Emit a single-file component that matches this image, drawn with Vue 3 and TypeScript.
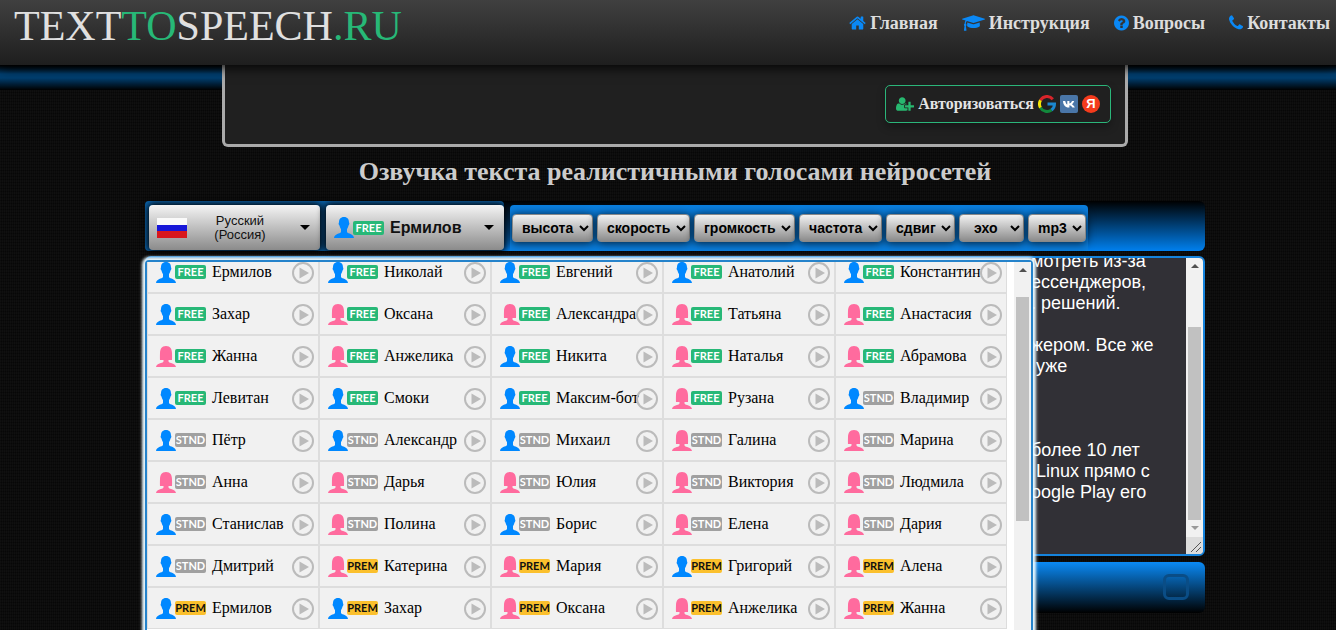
<script setup lang="ts">
import { onMounted, ref } from 'vue'

type Kind = 'm' | 'f'
type Tier = 'FREE' | 'STND' | 'PREM'
interface Voice { kind: Kind; tier: Tier; name: string }

const v = (kind: Kind, tier: Tier, name: string): Voice => ({ kind, tier, name })

const voices: Voice[] = [
  v('m', 'FREE', 'Ермилов'), v('m', 'FREE', 'Николай'), v('m', 'FREE', 'Евгений'), v('m', 'FREE', 'Анатолий'), v('m', 'FREE', 'Константин'),
  v('m', 'FREE', 'Захар'), v('f', 'FREE', 'Оксана'), v('f', 'FREE', 'Александра'), v('f', 'FREE', 'Татьяна'), v('f', 'FREE', 'Анастасия'),
  v('f', 'FREE', 'Жанна'), v('f', 'FREE', 'Анжелика'), v('m', 'FREE', 'Никита'), v('f', 'FREE', 'Наталья'), v('f', 'FREE', 'Абрамова'),
  v('m', 'FREE', 'Левитан'), v('m', 'FREE', 'Смоки'), v('m', 'FREE', 'Максим-бот'), v('f', 'FREE', 'Рузана'), v('m', 'STND', 'Владимир'),
  v('m', 'STND', 'Пётр'), v('m', 'STND', 'Александр'), v('m', 'STND', 'Михаил'), v('f', 'STND', 'Галина'), v('f', 'STND', 'Марина'),
  v('f', 'STND', 'Анна'), v('f', 'STND', 'Дарья'), v('f', 'STND', 'Юлия'), v('f', 'STND', 'Виктория'), v('f', 'STND', 'Людмила'),
  v('m', 'STND', 'Станислав'), v('f', 'STND', 'Полина'), v('m', 'STND', 'Борис'), v('f', 'STND', 'Елена'), v('f', 'STND', 'Дария'),
  v('m', 'STND', 'Дмитрий'), v('f', 'PREM', 'Катерина'), v('f', 'PREM', 'Мария'), v('m', 'PREM', 'Григорий'), v('f', 'PREM', 'Алена'),
  v('m', 'PREM', 'Ермилов'), v('m', 'PREM', 'Захар'), v('f', 'PREM', 'Оксана'), v('f', 'PREM', 'Анжелика'), v('f', 'PREM', 'Жанна'),
]

const person: Record<Kind, string> = {
  m: 'M10 0C6.500 0 5 2.300 5 5.400C4.300 5.600 4.700 8 5.500 8.600C5.900 10.500 6.500 11.500 7 12V15C6 17 0.500 16.500 0 21H20C19.500 16.500 14 17 13 15V12C13.500 11.500 14.100 10.500 14.500 8.600C15.300 8 15.700 5.600 15 5.400C15 2.300 13.500 0 10 0Z',
  f: 'M10 0C5.500 0 4.200 3 4 7C3.900 10 3.900 12.500 4 14H7.500V15.500C6.500 17.500 0.500 17 0 21H20C19.500 17 13.500 17.500 12.500 15.500V14H16C16.100 12.500 16.100 10 16 7C15.800 3 14.500 0 10 0Z',
}

const nav = [
  { label: 'Главная', w: 1664, icon: 'M1408 992v480q0 26-19 45t-45 19H960v-384H704v384H320q-26 0-45-19t-19-45V992l575-474 574 474zm223-69l-62 74q-8 9-21 11h-3q-13 0-21-7L832 424l-692 577q-12 8-24 7-13-2-21-11l-62-74q-8-10-7-23.500t11-21.500l719-599q32-26 76-26t76 26l244 204V288q0-14 9-23t23-9h192q14 0 23 9t9 23v408l219 182q10 8 11 21.500t-7 23.500z' },
  { label: 'Инструкция', w: 2304, icon: 'M1774 836l18 316q4 69-82 128t-235 93.500-323 34.500-323-34.500-235-93.500-82-128l18-316 574 181q22 7 48 7t48-7zm530-324q0 23-22 31l-1120 352q-4 1-10 1t-10-1L490 689q-43 34-71 111.500T385 979q63 36 63 109 0 69-58 107l58 433q2 14-8 25-9 11-24 11H224q-15 0-24-11-10-11-8-25l58-433q-58-38-58-107 0-73 65-111 11-207 98-330L22 543Q0 535 0 512t22-31L1142 129q4-1 10-1t10 1l1120 352q22 8 22 31z' },
  { label: 'Вопросы', w: 1536, icon: 'M896 1376v-192q0-14-9-23t-23-9H672q-14 0-23 9t-9 23v192q0 14 9 23t23 9h192q14 0 23-9t9-23zm256-672q0-88-55.500-163T958 425t-170-41q-243 0-371 213-15 24 8 42l132 100q7 6 19 6 16 0 25-12 53-68 86-92 34-24 86-24 48 0 85.500 26t37.500 59q0 38-20 61t-68 45q-63 28-115.500 86.500T640 1020v36q0 14 9 23t23 9h192q14 0 23-9t9-23q0-19 21.500-49.500T972 957q32-18 49-28.500t46-35 44.500-48 28-60.500 12.500-81zm384 192q0 209-103 385.500T1153.500 1561 768 1664t-385.500-103T103 1281.500 0 896t103-385.500T382.500 231 768 128t385.500 103T1433 510.500 1536 896z' },
  { label: 'Контакты', w: 1408, icon: 'M1408 1240q0 27-10 70.500t-21 68.500q-21 50-122 106-94 51-186 51-27 0-53-3.500t-57.500-12.500-47-14.500T856 1485t-49-18q-98-35-175-83-127-79-264-216T152 904q-48-77-83-175-3-9-18-49t-20.500-55.500T16 577.500 3.500 520 0 467q0-92 51-186 56-101 106-122 25-11 68.500-21T296 128q14 0 21 3 18 6 53 76 11 19 30 54t35 63.500 31 53.500q3 4 17.500 25t21.500 35.500 7 28.500q0 20-28.500 50t-62 55-62 53-28.500 46q0 9 5 22.500t8.500 20.500 14 24 11.500 19q76 137 174 235t235 174q2 1 19 11.500t24 14 20.500 8.500 22.500 5q18 0 46-28.500t53-62 55-62 50-28.500q14 0 28.500 7t35.500 21.500 25 17.500q25 15 53.500 31t63.500 35 54 30q70 35 76 53 3 7 3 21z' },
]

const params = ['высота', 'скорость', 'громкость', 'частота', 'сдвиг', 'эхо', 'mp3']

const text = ref(`мотреть из-за
ессенджеров,
. решений.

жером. Все же
 уже



более 10 лет
 Linux прямо с
oogle Play его`)

const list = ref<HTMLElement | null>(null)
const area = ref<HTMLTextAreaElement | null>(null)
onMounted(() => {
  if (list.value) list.value.scrollTop = 11
  if (area.value) area.value.scrollTop = 7
})
</script>

<template>
  <div class="page">
    <header class="header">
      <a href="#" class="logo">TEXT<b>TO</b>SPEECH<b>.RU</b></a>
      <nav class="nav">
        <a v-for="n in nav" :key="n.label" href="#">
          <svg :viewBox="`0 0 ${n.w} 1792`" :width="Math.round(n.w / 100)" height="18"><path :d="n.icon" /></svg>{{ n.label }}
        </a>
      </nav>
    </header>

    <div class="band">
      <section class="panel">
        <button type="button" class="login">
          <svg viewBox="0 0 2048 1792" width="18" height="18" class="green"><path d="M704 896q-159 0-271.500-112.500T320 512t112.500-271.500T704 128t271.500 112.500T1088 512 975.500 783.500 704 896zm960 128h352q13 0 22.500 9.500t9.500 22.500v192q0 13-9.500 22.500t-22.500 9.500h-352v352q0 13-9.500 22.500t-22.500 9.500h-192q-13 0-22.500-9.500t-9.500-22.500v-352h-352q-13 0-22.500-9.500t-9.500-22.500v-192q0-13 9.500-22.500t22.500-9.500h352V672q0-13 9.500-22.500t22.500-9.500h192q13 0 22.500 9.500t9.500 22.500v352zm-736 224q0 52 38 90t90 38h256v238q-68 50-171 50H267q-121 0-194-69T0 1405q0-53 3.500-103.500t14-109T44 1084t43-97.500 62-81 85.500-53.500T346 832q19 0 39 17 79 61 154.500 91.500T704 971t164.500-30.500T1023 849q20-17 39-17 132 0 217 96h-223q-52 0-90 38t-38 90v192z" /></svg>
          <span>Авторизоваться</span>
          <svg viewBox="0 0 18 18" width="18" height="18" class="ring">
            <path d="M14.800 4.200A7.500 7.500 0 0 0 2.500 5.300" stroke="#d8242a" />
            <path d="M2.500 5.300A7.500 7.500 0 0 0 2.500 12.700" stroke="#f5e505" />
            <path d="M2.500 12.700A7.500 7.500 0 0 0 13.500 15" stroke="#12893c" />
            <path d="M13.500 15A7.500 7.500 0 0 0 16.500 9H9.500" stroke="#1b87cf" />
          </svg>
          <svg viewBox="0 0 18 18" width="18" height="18"><rect width="18" height="18" rx="2" fill="#4a76a8" /><path d="M3 6H5.200C5.600 8 6.500 9.300 7.300 9.600V6H9.400V8.600C10.400 8.400 11.400 7.300 12 6H14.200C13.700 7.600 12.700 8.700 11.900 9.200C12.800 9.700 14.100 10.700 14.800 12.500H12.400C11.800 11.300 10.700 10.400 9.400 10.200V12.500H8.600C5.300 12.500 3.200 10 3 6Z" fill="#fff" /></svg>
          <span class="ya">Я</span>
        </button>
      </section>
    </div>

    <main class="main">
      <h1>Озвучка текста реалистичными голосами нейросетей</h1>

      <div class="toolbar">
        <div class="pickers">
          <button type="button" class="pick lang">
            <span class="flag"></span><span class="langname">Русский<br>(Россия)</span><i class="caret"></i>
          </button>
          <button type="button" class="pick voice">
            <svg viewBox="0 0 20 21" width="20" height="21" class="m"><path :d="person.m" /></svg><span class="tier free">FREE</span>
            <span class="current">Ермилов</span><i class="caret"></i>
          </button>
        </div>
        <div class="params">
          <select v-for="p in params" :key="p" :aria-label="p" :class="{ roomy: p === 'эхо' }"><option>{{ p }}</option></select>
        </div>
      </div>

      <div class="editor">
        <textarea ref="area" v-model="text" aria-label="Текст" spellcheck="false"></textarea>
        <div class="bar">
          <i class="up"></i><div class="thumb text-thumb"></div><i class="down"></i><svg class="grip" viewBox="0 0 17 17"><path d="M5 15L15 5M10 15L15 10" /></svg>
        </div>
      </div>

      <div class="footer"><button type="button" class="stop" aria-label="Стоп"></button></div>

      <div class="menu">
        <div ref="list" class="list">
          <div class="grid">
            <div v-for="(x, i) in voices" :key="i" class="cell">
              <svg viewBox="0 0 20 21" width="20" height="21" :class="x.kind"><path :d="person[x.kind]" /></svg>
              <span class="tier" :class="x.tier.toLowerCase()">{{ x.tier }}</span>
              <span class="name">{{ x.name }}</span>
              <button type="button" class="play" :aria-label="`Прослушать ${x.name}`">
                <svg viewBox="0 0 22 22" width="22" height="22"><circle cx="11" cy="11" r="10" /><path d="M7.500 5.500L17 11L7.500 16.500Z" /></svg>
              </button>
            </div>
          </div>
        </div>
        <div class="bar"><i class="up"></i><div class="thumb"></div></div>
      </div>
    </main>
  </div>
</template>

<style>
body { background: #0a0a0a; }
</style>

<style scoped>
* { box-sizing: border-box; }
.page {
  height: 100vh;
  overflow: hidden;
  font-family: "Liberation Serif", "Times New Roman", serif;
  background-color: #0b0b0b;
  background-image:
    repeating-linear-gradient(90deg, rgba(255, 255, 255, .02) 0 1px, transparent 1px 2px),
    repeating-linear-gradient(0deg, rgba(0, 0, 0, .4) 0 1px, transparent 1px 3px);
}
.header {
  position: relative; z-index: 3;
  display: flex; justify-content: space-between; align-items: flex-start;
  height: 65px; padding: 0 6px 0 14px;
  background: linear-gradient(#404040, #1e1e1e);
  box-shadow: 0 2px 12px #000;
}
.logo { color: #e0e0e0; font-size: 42px; line-height: 52px; text-decoration: none; }
.logo b { color: #27b877; font-weight: 400; }
.nav { display: flex; gap: 24px; }
.nav a { display: flex; align-items: center; gap: 4px; height: 46px; color: #ddd; font-weight: 700; font-size: 18px; text-decoration: none; }
.nav svg { fill: #0a88f5; }
.band { background: linear-gradient(#000, #003f70 9px, #003f70 13px, #000 25px, transparent 25px); padding-left: 14px; }
.panel {
  display: flex; justify-content: flex-end; align-items: flex-start;
  width: 906px; max-width: 100%; height: 82px; margin: 0 auto; padding: 20px 14px 0;
  background: #202020; border: 3px solid #aaa; border-top: 0; border-radius: 0 0 6px 6px;
}
.login {
  display: flex; align-items: center; gap: 4px; height: 38px; padding: 0 10px;
  background: transparent; border: 1px solid #2bb67a; border-radius: 5px; box-shadow: 0 4px 8px rgba(0, 0, 0, .3);
  color: #e4e4e4; font: 700 16px "Liberation Serif", serif;
}
.green { fill: #27b86f; }
.ring path { fill: none; stroke-width: 3; }
.ya { width: 18px; height: 18px; border-radius: 50%; background: #f43b1c; color: #fff; font: 700 13px/18px "Liberation Sans", sans-serif; text-align: center; }
.main { position: relative; width: calc(100% - 14px); max-width: 1060px; margin: 0 auto; left: 7px; }
h1 { margin: 0; height: 54px; padding-top: 10px; color: #ccc; font-size: 26px; line-height: 30px; text-align: center; white-space: nowrap; }
.toolbar { display: flex; align-items: flex-end; gap: 6px; height: 50px; border-radius: 6px; background: linear-gradient(#000, #0080ee); }
.pickers { display: flex; gap: 6px; height: 50px; padding: 4px 0 1px 4px; border-radius: 4px; background: #0b68b4; }
.pick { display: flex; align-items: center; height: 45px; padding: 0 10px 0 8px; border: 0; border-radius: 4px; background: linear-gradient(#f4f4f4, #8b8b8b); box-shadow: 0 0 7px 2px #000; color: #111; font-family: "Liberation Sans", Arial, sans-serif; }
.lang { width: 171px; font-size: 13px; line-height: 14px; justify-content: space-between; }
.langname { padding-right: 7px; }
.voice { width: 178px; }
.flag { width: 30px; height: 20px; background: linear-gradient(#fafafa 0 33%, #1717d8 33% 67%, #d8171d 67%); }
.caret { border: 5px solid transparent; border-top-color: #000; border-bottom: 0; }
.current { margin: 0 auto 0 6px; font-size: 16px; font-weight: 700; }
.params { display: flex; align-items: center; gap: 4px; height: 46px; padding: 0 2px; border-radius: 4px 4px 0 0; background: #0a7fe0; }
select { height: 28px; min-width: 58px; padding: 0 2px 0 5px; border: 1px solid #888; border-radius: 4px; background: linear-gradient(#f2f2f2, #8b8b8b); box-shadow: 0 1px 8px 1px rgba(0, 0, 0, .7); color: #000; font: 700 14px "Liberation Sans", Arial, sans-serif; }
.roomy { padding: 0 0 0 10px; width: 65px; }
.editor { display: flex; height: 300px; margin-top: 5px; border: 2px solid #1583dc; border-radius: 6px; overflow: hidden; background: #313036; }
textarea { flex: 1; padding: 0 0 80px calc(100% - 172px); border: 0; outline: 0; resize: none; overflow: hidden; background: #313036; color: #fff; font: 18px/21px "Liberation Sans", Arial, sans-serif; white-space: pre; }
.bar { display: flex; flex-direction: column; align-items: center; width: 17px; background: #f1f1f1; }
.up, .down { flex: none; border: 4px solid transparent; }
.up { margin-top: 6px; border-top: 0; border-bottom: 4px solid #505050; }
.thumb { width: 13px; height: 224px; margin-top: 25px; background: #c1c1c1; }
.text-thumb { height: 193px; margin-top: 59px; }
.down { margin-top: 6px; border-bottom: 0; border-top: 4px solid #999; }
.grip { width: 17px; height: 17px; margin-top: auto; background: #dcdcdc; stroke: #555; }
.footer { display: flex; justify-content: flex-end; height: 51px; margin-top: 6px; padding: 12px 16px; border-radius: 6px; background: linear-gradient(#0a8af5, #000); }
.stop { width: 26px; height: 26px; border: 3px solid #0a4d86; border-radius: 6px; background: transparent; }
.menu {
  position: absolute; z-index: 2; top: 113px; left: 0; display: flex; width: 888px; height: 420px;
  background: #fff; border: 2px solid #2583cb; border-radius: 4px; box-shadow: 0 0 3px 3px #e8f8ff;
}
.list { flex: 1; overflow: auto; scrollbar-width: none; }
.grid { display: grid; grid-template-columns: repeat(5, 172px); padding-bottom: 60px; }
.cell { position: relative; display: flex; align-items: center; height: 42px; padding-left: 8px; border: 1px solid #ddd; background: #f1f1f1; font-size: 16px; color: #000; white-space: nowrap; }
.m { fill: #0088ff; }
.f { fill: #ff6b9e; }
.tier { width: 31px; height: 14px; margin-left: -1px; border-radius: 2px; color: #fff; font: 700 11px/14px Lato, "Open Sans", sans-serif; text-align: center; }
.free { background: #27b877; }
.stnd { background: #a0a0a0; }
.prem { background: #fbc02d; color: #111; }
.name { margin-left: 6px; }
.play { position: absolute; right: 4px; top: 10px; width: 22px; height: 22px; padding: 0; border: 0; background: none; }
.play circle { fill: none; stroke: #bbb; stroke-width: 2; }
.play path { fill: #bbb; }
</style>
